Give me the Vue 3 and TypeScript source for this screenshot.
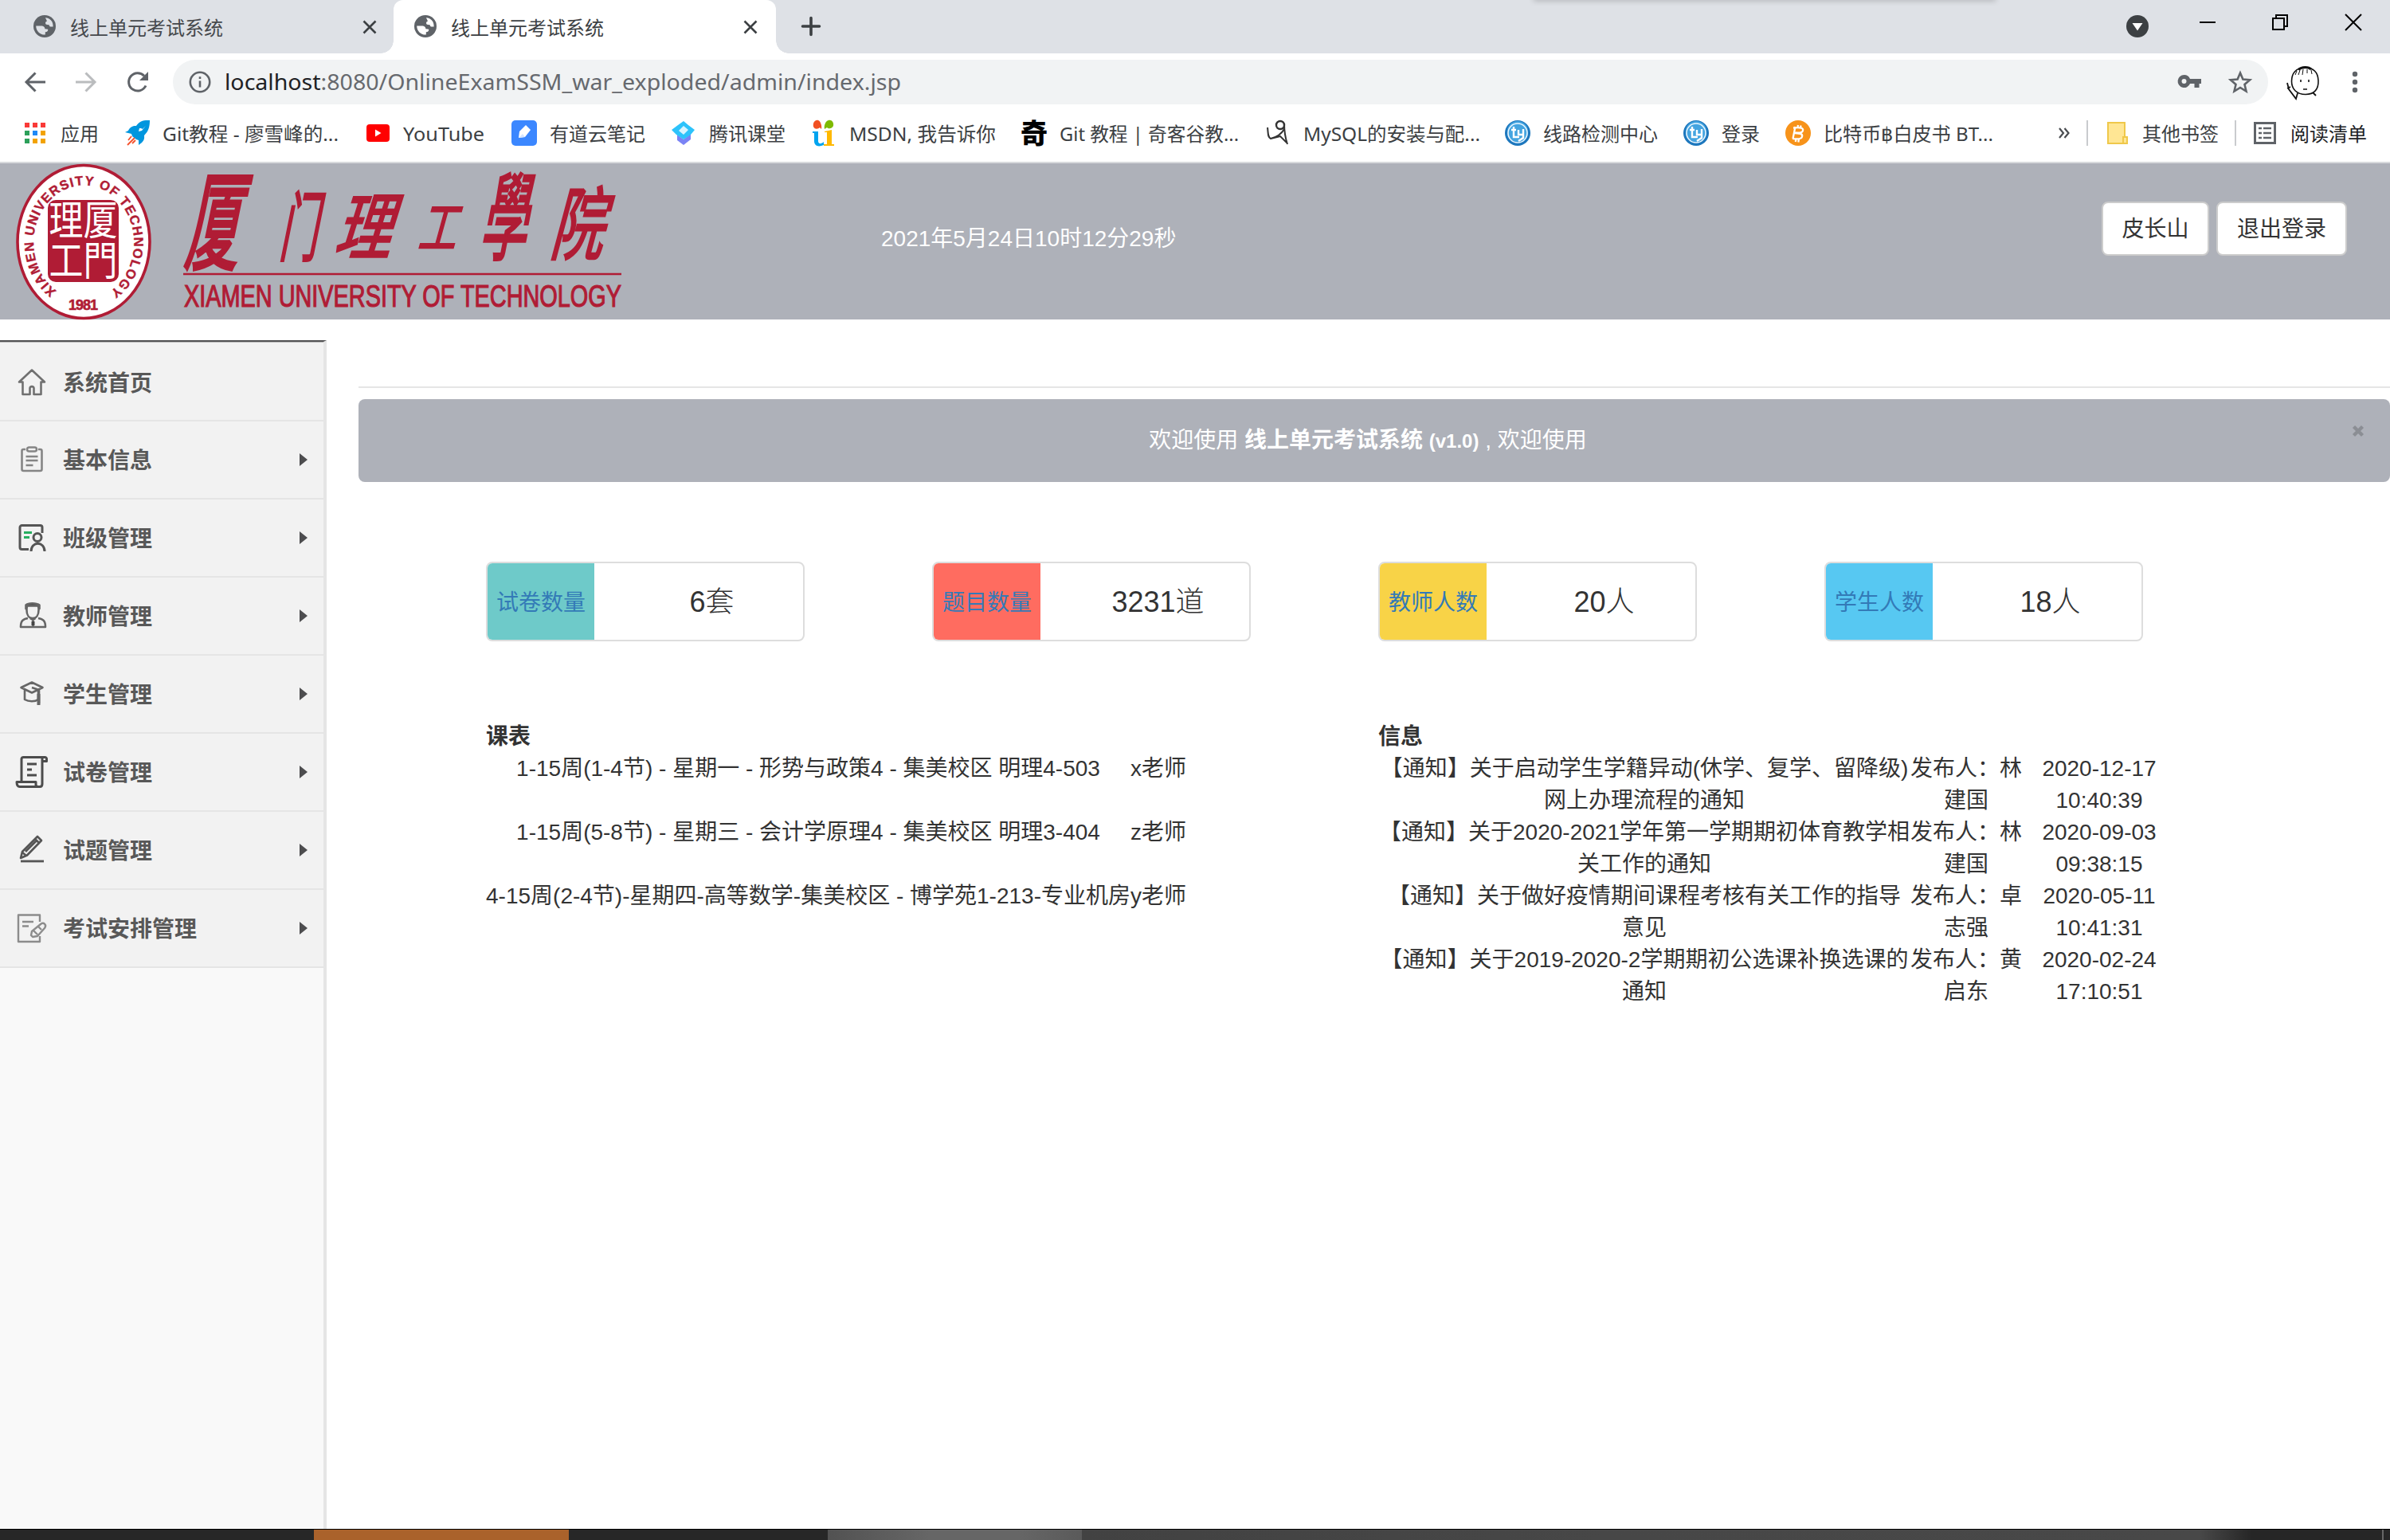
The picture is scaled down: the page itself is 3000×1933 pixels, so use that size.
<script setup lang="ts">
interface Bookmark { icon: string; label: string; width: number; fit: number }
interface MenuItem { icon: string; label: string; arrow: boolean }
interface Stat { label: string; value: string; color: string }
interface Brush { ch: string; x: number; y: number; w: number; h: number }

const tabs = [
  { title: '线上单元考试系统', active: false },
  { title: '线上单元考试系统', active: true },
]

const bookmarks: Bookmark[] = [
  { icon: 'apps', label: '应用', width: 128, fit: 48 },
  { icon: 'rocket', label: 'Git教程 - 廖雪峰的...', width: 302, fit: 221 },
  { icon: 'youtube', label: 'YouTube', width: 184, fit: 102 },
  { icon: 'youdao', label: '有道云笔记', width: 200, fit: 120 },
  { icon: 'tencent', label: '腾讯课堂', width: 176, fit: 96 },
  { icon: 'msdn', label: 'MSDN, 我告诉你', width: 264, fit: 184 },
  { icon: 'qi', label: 'Git 教程 | 奇客谷教...', width: 306, fit: 225 },
  { icon: 'mysql', label: 'MySQL的安装与配...', width: 301, fit: 222 },
  { icon: 'tuyou', label: '线路检测中心', width: 224, fit: 144 },
  { icon: 'tuyou', label: '登录', width: 128, fit: 48 },
  { icon: 'bitcoin', label: '比特币฿白皮书 BT...', width: 300, fit: 213 },
]

const brush: Brush[] = [
  { ch: '厦', x: 231, y: 7, w: 89, h: 127 },
  { ch: '门', x: 350, y: 33, w: 62, h: 90 },
  { ch: '理', x: 419, y: 34, w: 92, h: 86 },
  { ch: '工', x: 524, y: 46, w: 62, h: 66 },
  { ch: '學', x: 602, y: 9, w: 76, h: 113 },
  { ch: '院', x: 690, y: 27, w: 86, h: 94 },
]
const brushTransform = (b: Brush) =>
  `translate(${b.x} ${b.y + b.h}) scale(${b.w / 130} ${b.h / 94}) skewX(-22) translate(-4 -8)`

const menu: MenuItem[] = [
  { icon: 'home', label: '系统首页', arrow: false },
  { icon: 'clip', label: '基本信息', arrow: true },
  { icon: 'class', label: '班级管理', arrow: true },
  { icon: 'teacher', label: '教师管理', arrow: true },
  { icon: 'student', label: '学生管理', arrow: true },
  { icon: 'scroll', label: '试卷管理', arrow: true },
  { icon: 'pencil', label: '试题管理', arrow: true },
  { icon: 'plan', label: '考试安排管理', arrow: true },
]

const stats: Stat[] = [
  { label: '试卷数量', value: '6套', color: '#6ecac9' },
  { label: '题目数量', value: '3231道', color: '#ff6c60' },
  { label: '教师人数', value: '20人', color: '#f8d347' },
  { label: '学生人数', value: '18人', color: '#57c8f2' },
]

const schedule = [
  ['1-15周(1-4节) - 星期一 - 形势与政策4 - 集美校区 明理4-503', 'x老师'],
  ['1-15周(5-8节) - 星期三 - 会计学原理4 - 集美校区 明理3-404', 'z老师'],
  ['4-15周(2-4节)-星期四-高等数学-集美校区 - 博学苑1-213-专业机房', 'y老师'],
]

const notices: string[][][] = [
  [['【通知】关于启动学生学籍异动(休学、复学、留降级)', '网上办理流程的通知'], ['发布人：林', '建国'], ['2020-12-17', '10:40:39']],
  [['【通知】关于2020-2021学年第一学期期初体育教学相', '关工作的通知'], ['发布人：林', '建国'], ['2020-09-03', '09:38:15']],
  [['【通知】关于做好疫情期间课程考核有关工作的指导', '意见'], ['发布人：卓', '志强'], ['2020-05-11', '10:41:31']],
  [['【通知】关于2019-2020-2学期期初公选课补换选课的', '通知'], ['发布人：黄', '启东'], ['2020-02-24', '17:10:51']],
]
</script>

<template>
  <div class="screen">
    <div class="tabstrip">
      <div class="overhang"></div>
      <div v-for="(t, i) in tabs" :key="i" class="tab" :class="{ active: t.active }">
        <svg class="globe" width="28" height="28" viewBox="0 0 28 28">
          <circle cx="14" cy="14" r="14" fill="#5f6368" />
          <path d="M15 3.200c3.500-.2 6.500 2 8.200 4.800 1 2 1.500 4 1.400 6.500h-3.200c-1.200-.3-1.600-1.300-1.700-2.300-2.400 0-4.700.1-4.700-2.100 0-1.500.7-2 1.900-2.400-.4-1.600-1.200-2.700-1.900-4.500z" :fill="t.active ? '#fff' : '#dee1e6'" />
          <path d="M3.200 13.500l7.600 0c2.300.4 3.400 1.500 3.600 3.700l3.800.5c.2 2-.8 3.500-3.400 3.600v3.300C8.500 25 3.200 20 3.200 13.500z" :fill="t.active ? '#fff' : '#dee1e6'" />
        </svg>
        <span class="tab-title">{{ t.title }}</span>
        <svg class="tab-x" width="18" height="18" viewBox="0 0 18 18"><path d="M1.500 1.500l15 15M16.500 1.500l-15 15" stroke="#3c4043" stroke-width="2.600" /></svg>
      </div>
      <svg class="plus" width="24" height="24" viewBox="0 0 24 24"><path d="M12 1.500v21M1.500 12h21" stroke="#3c4043" stroke-width="3.600" stroke-linecap="round" /></svg>
      <div class="window-buttons">
        <svg width="28" height="28" viewBox="0 0 28 28"><circle cx="14" cy="14" r="14" fill="#3c4043" /><path d="M7.500 10h13L14 19.500z" fill="#fff" /></svg>
        <svg width="20" height="20" viewBox="0 0 20 20"><path d="M0 10h20" stroke="#000" stroke-width="2" /></svg>
        <svg width="20" height="20" viewBox="0 0 20 20" fill="none" stroke="#000" stroke-width="2"><path d="M1 5h14v14H1zM5 5V1h14v14h-4" /></svg>
        <svg width="20" height="20" viewBox="0 0 20 20"><path d="M0 0l20 20M20 0L0 20" stroke="#000" stroke-width="2" /></svg>
      </div>
    </div>

    <div class="toolbar">
      <svg width="26" height="26" viewBox="0 0 26 26" fill="none" stroke="#5f6368" stroke-width="3"><path d="M26 13H2.500M13.500 1.500L2 13l11.500 11.500" /></svg>
      <svg width="26" height="26" viewBox="0 0 26 26" fill="none" stroke="#babcbe" stroke-width="3"><path d="M0 13h23.500M12.500 1.500L24 13 12.500 24.500" /></svg>
      <svg width="28" height="28" viewBox="0 0 28 28"><path d="M24 18.500A11.200 11.200 0 1 1 22 6.200" fill="none" stroke="#5f6368" stroke-width="3" /><path d="M27 1v11H16z" fill="#5f6368" /></svg>
      <div class="omnibox">
        <svg width="28" height="28" viewBox="0 0 28 28" fill="none" stroke="#5f6368" stroke-width="2.600"><circle cx="14" cy="14" r="12.200" /><path d="M14 12.500v8M14 7.200v2.800" /></svg>
        <svg class="url" width="860" height="40" viewBox="0 0 860 40">
          <text x="0" y="30" textLength="849" lengthAdjust="spacingAndGlyphs" fill="#66696e"><tspan fill="#202124">localhost</tspan>:8080/OnlineExamSSM_war_exploded/admin/index.jsp</text>
        </svg>
        <svg class="key" width="30" height="18" viewBox="0 0 30 18"><path fill-rule="evenodd" d="M8.500 1a8 8 0 1 0 7.500 11h5.500v5h6v-5H30V6H16A8 8 0 0 0 8.500 1zm0 5a3 3 0 1 1 0 6 3 3 0 0 1 0-6z" fill="#5f6368" /></svg>
        <svg width="30" height="30" viewBox="0 0 30 30"><path d="M15 3.500l3.400 8 8.700.8-6.600 5.700 2 8.500L15 22l-7.500 4.500 2-8.500-6.600-5.700 8.700-.8z" fill="none" stroke="#5f6368" stroke-width="2.600" /></svg>
      </div>
      <svg class="avatar" width="46" height="46" viewBox="0 0 46 46" fill="none" stroke="#111">
        <path d="M24 5C13 5 7.500 12 7.500 22S14 38.500 25 38.500 41.500 32 41 21 35 5 24 5z" stroke-width="1.600" />
        <path d="M16 7.500c4-4 13-4 16-.5" stroke-width="3" />
        <path d="M14 9l-2 5M18 8l-2 6M22 7l-1 7M27 7v5M32 8l1 5" stroke-width="1" />
        <path d="M19 20v3M29 20v3M22 32h5" stroke-width="1.600" />
        <path d="M2 24l2 8 9 12 2-7M2 31l4-2M34 36l4 4" stroke-width="1.800" />
      </svg>
      <svg class="dots" width="8" height="28" viewBox="0 0 8 28" fill="#5f6368"><circle cx="4" cy="4" r="3.200" /><circle cx="4" cy="14" r="3.200" /><circle cx="4" cy="24" r="3.200" /></svg>
    </div>

    <div class="bookmarks">
      <div v-for="(b, i) in bookmarks" :key="i" class="bookmark" :style="{ width: b.width + 'px' }">
        <svg class="bicon" width="32" height="32" viewBox="0 0 32 32">
          <g v-if="b.icon === 'apps'">
            <path d="M3 3h6v6H3zM13 3h6v6h-6zM23 3h6v6h-6z" fill="#f93a37" />
            <path d="M3 13h6v6H3zM3 23h6v6H3z" fill="#2ca05a" /><path d="M13 13h6v6h-6z" fill="#1e88f7" />
            <path d="M23 13h6v6h-6zM13 23h6v6h-6zM23 23h6v6h-6z" fill="#f2a200" />
          </g>
          <g v-else-if="b.icon === 'rocket'">
            <path d="M32 0c-8-.5-13 1-17 7-5-.5-8 2-10 6l-4 2 8 2 1 3 5 4 3 1v6l4-3c4-4 3-7 3-9 5-5 7-10 7-19z" fill="#0096de" />
            <path d="M19 10l-1 4 4-1 5-6-4 4-2-1z" fill="#fff" />
            <path d="M9 20l-4 5M13 22l-9 9M14 25l-4 4" stroke="#f4512c" stroke-width="1.800" />
          </g>
          <g v-else-if="b.icon === 'youtube'"><rect x="2" y="5" width="29" height="22" rx="4" fill="#f00" /><path d="M13 11.500v9l7.500-4.500z" fill="#fff" /></g>
          <g v-else-if="b.icon === 'youdao'"><rect width="32" height="32" rx="5" fill="#3b87ff" /><path d="M9 22l1-8 8-8 6 6-7 9z" fill="#fff" /><path d="M9 22l5-5 3 4z" fill="#d5e5ff" /></g>
          <g v-else-if="b.icon === 'tencent'"><path d="M8 18l8 6 9-7v7l-9 7-8-6z" fill="#7a83f5" /><path d="M16 1l6 5 8 6-5 6-9 6-9-6-6-6 8-6z" fill="#2dc3fb" /><path d="M16 7l6 5-6 6-6-5z" fill="#d9f5ff" /></g>
          <g v-else-if="b.icon === 'msdn'">
            <path d="M9 0c-4-1-7 3-6 8 2 4 6 3 8 1l2 2c1-4-1-10-4-11z" fill="#f15022" /><path d="M22 0c4-1 7 3 6 7-2 4-6 4-8 2l-3 2c-1-4 1-10 5-11z" fill="#7fba00" />
            <path d="M2 14h7v12c0 4 4 4 7 1v4c-7 3-12 1-12-5V16H2z" fill="#00a4ef" /><path d="M17 14l9-2v18h3v2H16v-2h4V15h-3z" fill="#ffb900" />
          </g>
          <text v-else-if="b.icon === 'qi'" x="-1" y="28.500" class="qi">奇</text>
          <g v-else-if="b.icon === 'mysql'" fill="none" stroke="#333">
            <circle cx="19" cy="6" r="5" stroke-width="2.400" /><path d="M3 9c1 7 0 12 4 14 8-2 13-5 17-12M24 4c0 10 1 17 4 26M7 23l12-3 8 8" stroke-width="2" />
          </g>
          <g v-else-if="b.icon === 'tuyou'">
            <circle cx="16" cy="16" r="16" fill="#1d77bd" /><circle cx="16" cy="14" r="13" fill="#44a4e0" /><circle cx="16" cy="16" r="12" fill="none" stroke="#e8f6ff" stroke-width="1.600" />
            <path d="M11 8v13h7M8 12h6M17 12v6h6M23 11v11l-6 4" fill="none" stroke="#fff" stroke-width="2.400" />
          </g>
          <g v-else>
            <circle cx="16" cy="16" r="16" fill="#f7931a" />
            <path d="M12.500 8l-3 15M10 9.500c9-1 13 0 12 3.500-.6 3-5 3-9.500 2.500M12 16c7 .5 10 1 9 4.500-.8 3.500-7 3.200-12 2.300M16 6l-.7 4M19.500 6.500L19 10M13.500 23l-.7 4M17 23.500l-.7 4" fill="none" stroke="#fff" stroke-width="2.300" />
          </g>
        </svg>
        <svg class="blabel" :width="b.fit + 4" height="36"><text x="0" y="27.500" :textLength="b.fit" lengthAdjust="spacingAndGlyphs">{{ b.label }}</text></svg>
      </div>
      <svg class="more" width="14" height="14" viewBox="0 0 14 14" fill="none" stroke="#4a4d51" stroke-width="2.200"><path d="M1 1l5 6-5 6M7.500 1l5 6-5 6" /></svg>
      <i class="sep"></i>
      <svg class="folder" width="26" height="28" viewBox="0 0 26 28"><path d="M1 1h21v18h3v8H1z" fill="#ffe694" stroke="#efc84a" stroke-width="2" /><path d="M20 27v-8h3" fill="none" stroke="#efc84a" stroke-width="2" /></svg>
      <span class="other">其他书签</span>
      <i class="sep"></i>
      <svg class="reading" width="28" height="28" viewBox="0 0 28 28"><path d="M1.500 1.500h25v25h-25z" fill="none" stroke="#5f6368" stroke-width="3" /><path d="M6 8h4M12 8h10M6 14h4M12 14h10M6 20h4M12 20h10" stroke="#5f6368" stroke-width="2.600" /></svg>
      <span class="readlabel">阅读清单</span>
    </div>

    <header class="banner">
      <svg class="logo" width="800" height="196" viewBox="0 0 800 196">
        <ellipse cx="105" cy="98.500" rx="83" ry="96" fill="#fff" stroke="#b01c35" stroke-width="3.600" />
        <path id="ring" d="M71 160A63 72 0 1 1 142 158" fill="none" />
        <text class="ring-text" textLength="352" lengthAdjust="spacing"><textPath href="#ring">XIAMEN UNIVERSITY OF TECHNOLOGY</textPath></text>
        <text class="ring-year" x="86" y="184" textLength="37">1981</text>
        <rect x="60" y="46" width="89" height="103" rx="10" fill="#b01c35" />
        <g class="seal">
          <text transform="translate(61.500 90) scale(1 1.180)">理厦</text>
          <text transform="translate(61.500 141) scale(1 1.180)">工門</text>
        </g>
        <text v-for="b in brush" :key="b.ch" class="brush" :transform="brushTransform(b)">{{ b.ch }}</text>
        <path d="M230 139h550" stroke="#b01c35" stroke-width="2.400" />
        <text class="uni" x="231" y="179.500" textLength="549" lengthAdjust="spacingAndGlyphs">XIAMEN UNIVERSITY OF TECHNOLOGY</text>
      </svg>
      <div class="clock">2021年5月24日10时12分29秒</div>
      <div class="actions"><button>皮长山</button><button>退出登录</button></div>
    </header>

    <div class="page">
      <nav class="sidebar">
        <div v-for="m in menu" :key="m.label" class="item">
          <svg width="40" height="40" viewBox="0 0 40 40" fill="none" stroke="#666" stroke-width="2.600" stroke-linejoin="round">
            <path v-if="m.icon === 'home'" d="M20 4.500L4 19.500h4.500V35h9v-8a2.600 2.600 0 0 1 5 0v8h9V19.500H36z" stroke="#707070" />
            <g v-else-if="m.icon === 'clip'" stroke="#858585"><path d="M12 7H9.500a2 2 0 0 0-2 2v23a2 2 0 0 0 2 2h21a2 2 0 0 0 2-2V9a2 2 0 0 0-2-2H28" /><rect x="14" y="4.500" width="12" height="5" rx="2.500" /><path d="M12.500 16h15M12.500 21h15M12.500 27h9" /></g>
            <g v-else-if="m.icon === 'class'" stroke="#555" stroke-width="3"><path d="M33 14V7a2.500 2.500 0 0 0-2.500-2.500h-23A2.500 2.500 0 0 0 5 7v25a2.500 2.500 0 0 0 2.500 2.500H16" /><circle cx="27" cy="19.500" r="5" /><path d="M19 37c0-13 17-13 17 0" /><path d="M10 13.500h10M10 19.500h7" stroke="#27ae60" /></g>
            <g v-else-if="m.icon === 'teacher'"><path d="M13.500 6h15v7c0 6-3 10-7.500 10s-7.500-4-7.500-10z" /><path d="M12.500 11V6.500c3-3 13-3 17 0V11l-2-3.500h-13z" fill="#444" /><path d="M15 23c-6 1-9 3-9 11h31c0-8-3-10-9-11M18 23l3.500 2 3-2M21.500 25v8" /><path d="M21.500 27v5" stroke="#444" stroke-width="4" /></g>
            <g v-else-if="m.icon === 'student'"><path d="M6.500 12L20 5.500 33.500 12 20 18.500zM11 15v12c5 3 13 3 17 0V15M20 12l9 3v17" /><path d="M28.500 20v14" stroke-width="4" /></g>
            <g v-else-if="m.icon === 'scroll'" stroke="#4c4c4c" stroke-width="3"><path d="M7 32V3.500A2.500 2.500 0 0 1 9.500 1.500H36a2 2 0 0 1 2.500 2v3H33M33 3v32c0 2-1 3.500-3 3.500H5c-2.500 0-4-2-4-6h24v3.500c0 2 1 2.500 3 2.500" /><path d="M14 10h12M14 17h6M14 24h12" /></g>
            <g v-else-if="m.icon === 'pencil'" stroke="#555"><path d="M6 30l2-8L27 3l5 5-18 18.500zM12 22L26 8M24 6l5 5M8 23l5 4" /><path d="M6 34h29" stroke-width="2.800" /></g>
            <g v-else stroke="#8c8c8c" stroke-width="2.400"><path d="M30 12V3.500H3V37h27v-7M8 12h14M8 17.500h8" /><path d="M19 29l1-5 11-9c4-3 8 1 5 5l-9 10-6 1zM22 23l5 5M28 18l4 4" /></g>
          </svg>
          <span>{{ m.label }}</span>
          <i v-if="m.arrow" class="arrow"></i>
        </div>
      </nav>

      <main>
        <hr />
        <div class="alert">
          <p>欢迎使用 <strong>线上单元考试系统 <small>(v1.0)</small></strong> , 欢迎使用</p>
          <svg class="dismiss" width="16" height="16" viewBox="0 0 16 16"><path d="M2.500 2.500l11 11M13.500 2.500l-11 11" stroke="#8b8e94" stroke-width="4.400" /></svg>
        </div>
        <div class="stats">
          <div v-for="s in stats" :key="s.label" class="stat">
            <div class="stat-label" :style="{ background: s.color }">{{ s.label }}</div>
            <div class="stat-value">{{ s.value }}</div>
          </div>
        </div>
        <div class="tables">
          <section class="left">
            <b>课表</b>
            <div v-for="(r, i) in schedule" :key="i" class="srow"><span>{{ r[0] }}</span><span>{{ r[1] }}</span></div>
          </section>
          <section class="right">
            <b>信息</b>
            <div v-for="(r, i) in notices" :key="i" class="nrow">
              <div v-for="(c, j) in r" :key="j"><div v-for="l in c" :key="l">{{ l }}</div></div>
            </div>
          </section>
        </div>
      </main>
    </div>

    <footer class="taskbar"><i class="a"></i><i class="b"></i><i class="c"></i><i class="d"></i><i class="e"></i></footer>
  </div>
</template>

<style>
html, body { margin: 0; background: #fff; overflow: hidden; }
</style>

<style scoped>
.screen { width: 3000px; height: 1933px; display: flex; flex-direction: column; overflow: hidden; background: #fff; color: #333; font: 28px/40px "Liberation Sans", "Noto Sans CJK SC", sans-serif; }
.screen * { box-sizing: border-box; }
svg { display: block; flex: none; overflow: visible; }

.tabstrip { position: relative; height: 67px; flex: none; display: flex; background: #dee1e6; font: 24px/36px "Noto Sans", "Noto Sans CJK SC", sans-serif; color: #45484c; }
.overhang { position: absolute; left: 1925px; top: -6px; width: 580px; height: 6px; box-shadow: 0 1px 7px rgba(0, 0, 0, .22); }
.tab { position: relative; width: 480px; height: 67px; display: flex; padding: 0 23px 0 26px; }
.overhang + .tab { width: 494px; padding: 0 21px 0 42px; }
.globe { margin-top: 19px; }
.tab-title { margin: 17px 0 0 18px; flex: 1; white-space: nowrap; }
.tab-x { margin-top: 25px; }
.tab.active { background: #fff; border-radius: 12px 12px 0 0; color: #3c4043; }
.tab.active::before, .tab.active::after { content: ""; position: absolute; bottom: 0; width: 16px; height: 16px; }
.tab.active::before { left: -16px; background: radial-gradient(circle at 0 0, transparent 15.500px, #fff 16px); }
.tab.active::after { right: -16px; background: radial-gradient(circle at 100% 0, transparent 15.500px, #fff 16px); }
.plus { margin: 21px 0 0 32px; }
.window-buttons { margin-left: auto; display: flex; padding: 18px 36px 0 0; }
.window-buttons svg + svg { margin-left: 72px; }
.window-buttons svg:first-child { margin-top: 1px; }
.window-buttons svg:nth-child(2) { margin-left: 64px; }
.window-buttons svg:nth-child(3) { margin-left: 71px; }

.toolbar { height: 72px; flex: none; display: flex; align-items: center; padding: 0 40px 0 31px; }
.toolbar > svg:nth-child(2) { margin-left: 38px; }
.toolbar > svg:nth-child(3) { margin-left: 38px; }
.omnibox { margin-left: 30px; width: 2630px; height: 56px; border-radius: 28px; background: #f1f3f4; display: flex; align-items: center; padding: 0 20px; }
.url { margin: 0 auto 0 17px; font: 28px "Noto Sans", sans-serif; }
.key { margin-right: 34px; margin-top: -2px; }
.avatar { margin-left: 22px; }
.dots { margin-left: 37px; }

.bookmarks { height: 66px; flex: none; display: flex; align-items: center; padding: 0 0 8px 28px; border-bottom: 2px solid #d8dadd; font: 24px/36px "Noto Sans", "Noto Sans CJK SC", sans-serif; color: #3c4043; white-space: nowrap; }
.bookmark { display: flex; align-items: center; flex: none; }
.bicon { margin-right: 16px; }
.blabel text { fill: #3c4043; }
.qi { font: 900 34px "Noto Sans CJK SC", sans-serif; fill: #000; }
.more { margin-left: 43px; }
.sep { width: 2px; height: 32px; background: #c9cbce; flex: none; margin-left: 21px; }
.folder { margin-left: 24px; }
.other { margin: 2px 0 0 18px; }
.reading { margin-left: 22px; }
.readlabel { margin: 2px 0 0 18px; color: #202124; }
.other + .sep { margin-left: 20px; }

.banner { position: relative; height: 196px; flex: none; background: #aeb1b9; display: flex; }
.logo { font-family: "Liberation Sans", "Noto Sans CJK SC", sans-serif; fill: #b01c35; }
.ring-text { font-weight: 700; font-size: 16.500px; stroke: #b01c35; stroke-width: .4px; }
.ring-year { font-weight: 700; font-size: 18px; stroke: #b01c35; stroke-width: .6px; }
.seal { fill: #fff; font-size: 43px; font-family: "Noto Sans CJK SC", sans-serif; }
.brush { font: 400 100px "Noto Sans CJK SC", sans-serif; stroke: #b01c35; stroke-width: 3px; }
.uni { font-size: 38px; stroke: #b01c35; stroke-width: 1.200px; }
.clock { color: #fff; margin: 75px 0 0 306px; white-space: nowrap; }
.actions { margin: 48px 54px 0 auto; display: flex; gap: 9px; }
.actions button { height: 68px; padding: 1px 24px 0; border: 2px solid #ccc; border-radius: 8px; background: #fff; font: inherit; color: #333; }
.actions button:first-child { width: 135px; padding: 1px 0 0; }

.page { flex: 1; display: flex; min-height: 0; }
.sidebar { width: 410px; margin-top: 26px; border-top: 2px solid #525254; border-right: 4px solid #e5e5e5; background: #f9f9f9; flex: none; position: relative; }
.item { height: 98px; border-bottom: 2px solid #e5e5e5; background: #f2f2f2; display: flex; align-items: center; padding: 0 20px; font-weight: 700; color: #585858; }
.item:first-child { height: 100px; border-top: 1px solid #b9b9b9; padding-top: 3px; }
.item span { margin: 4px 0 0 19px; }
.arrow { margin-left: auto; border-left: 10px solid #4d4d4f; border-top: 8px solid transparent; border-bottom: 8px solid transparent; }

main { flex: 1; margin: 84px 0 0 40px; min-width: 0; }
hr { margin: 0 0 14px; border: 0; height: 2px; background: #e5e5e5; }
.alert { position: relative; height: 104px; border-radius: 8px; background: #aeb1b9; color: #fff; text-align: center; padding: 31px 16px 0 0; }
.alert p { margin: 1px 0 0; }
.alert small { font-size: 24px; }
.dismiss { position: absolute; right: 32px; top: 32px; }
.stats { display: flex; gap: 160px; margin: 100px 0 0 160px; }
.stat { width: 400px; height: 100px; border: 2px solid #ddd; border-radius: 8px; display: flex; align-items: center; overflow: hidden; }
.stat-label { width: 134px; height: 100%; line-height: 100px; text-align: center; color: #337ab7; }
.stat-value { flex: 1; padding: 2px 0 0 33px; text-align: center; font-size: 36px; font-weight: 300; }
.tables { display: flex; margin: 100px 0 0 160px; white-space: nowrap; }
.left { width: 1120px; }
.left b, .right b { display: block; }
.srow { display: grid; grid-template-columns: 809px 70px; height: 80px; text-align: center; justify-items: center; }
.right { width: 1002px; }
.nrow { display: grid; grid-template-columns: 668px 140px 194px; text-align: center; }

.taskbar { height: 14px; flex: none; border-top: 1px solid #000; background: #272727; display: flex; }
.taskbar i { height: 13px; flex: none; }
.taskbar .a { width: 394px; }
.taskbar .b { width: 320px; background: #aa622b; }
.taskbar .c { width: 325px; }
.taskbar .d { width: 319px; background: linear-gradient(90deg, #525252, #666 40%, #666 75%, #5a5a5a); }
.taskbar .e { width: 1634px; background: linear-gradient(90deg, #424242, #474747 40%, #484848 86%, #262626 90%); border-right: 2px solid #666; }
</style>
